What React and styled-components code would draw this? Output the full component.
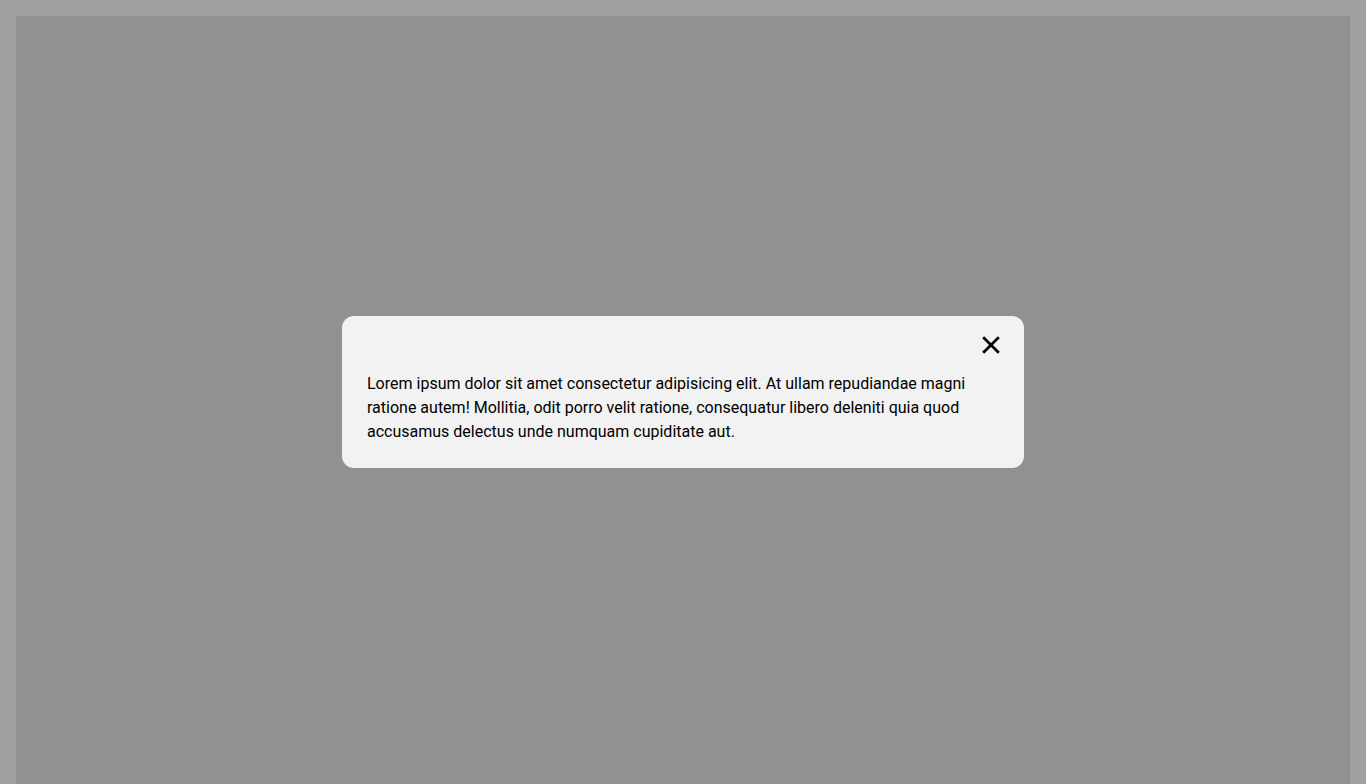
import React from "react";
import styled, { createGlobalStyle } from "styled-components";

const Global = createGlobalStyle`
  html, body { margin: 0; padding: 0; }
  body {
    background: #a0a0a0;
    font-family: Roboto, "Liberation Sans", sans-serif;
    overflow: hidden;
  }
`;

const Page = styled.div`
  padding: 16px 16px 0;
  height: 784px;
  box-sizing: border-box;
`;

const Stage = styled.main`
  background: #919191;
  height: 100%;
`;

const Overlay = styled.div`
  position: fixed;
  inset: 0;
  display: flex;
  align-items: center;
  justify-content: center;
`;

const Dialog = styled.div`
  width: 682px;
  box-sizing: border-box;
  background: #f2f2f2;
  border-radius: 12px;
  padding: 16px 24px 24px 25px;
  display: flex;
  flex-direction: column;
`;

const Header = styled.div`
  height: 26px;
  display: flex;
  justify-content: flex-end;
  align-items: center;
`;

const CloseButton = styled.button`
  width: 18px;
  height: 18px;
  padding: 0;
  border: 0;
  background: none;
  cursor: pointer;
  display: flex;
  color: #000;
`;

const Body = styled.p`
  margin: 14px 0 0;
  font-size: 16px;
  line-height: 24px;
  color: #000;
`;

export default function App() {
  return (
    <>
      <Global />
      <Page>
        <Stage />
      </Page>
      <Overlay>
        <Dialog role="dialog">
          <Header>
            <CloseButton aria-label="Close">
              <svg width="18" height="18" viewBox="0 0 18 18">
                <path d="M1.2 1.2 L16.8 16.8 M16.8 1.2 L1.2 16.8" stroke="currentColor" strokeWidth="2.7" fill="none" />
              </svg>
            </CloseButton>
          </Header>
          <Body>
            Lorem ipsum dolor sit amet consectetur adipisicing elit. At ullam repudiandae magni ratione autem! Mollitia, odit porro velit ratione, consequatur libero deleniti quia quod accusamus delectus unde numquam cupiditate aut.
          </Body>
        </Dialog>
      </Overlay>
    </>
  );
}
